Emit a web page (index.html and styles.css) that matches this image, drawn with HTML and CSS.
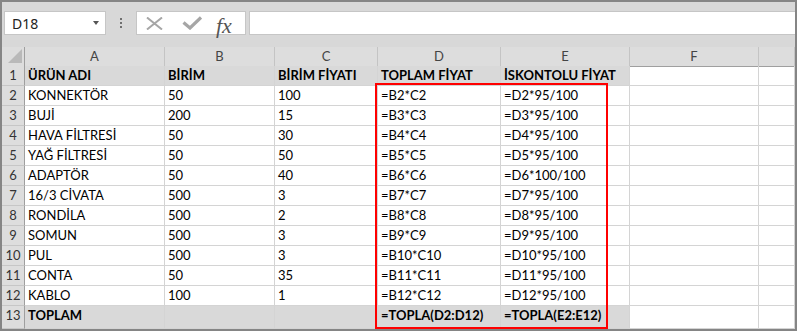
FILE: index.html
```html
<!DOCTYPE html>
<html lang="tr">

<head>
    <meta charset="UTF-8">
    <meta name="viewport" content="width=device-width, initial-scale=1.0">
    <title>Toplam ve iskontolu fiyat</title>
    <link rel="stylesheet" href="styles.css">
</head>

<body>
    <div class="window">
        <div class="formula-bar">
            <div class="name-box">
                <span>D18</span>
                <span class="caret"></span>
            </div>
            <div class="grip"><i></i><i></i><i></i></div>
            <div class="fx-buttons">
                <svg class="icon-cancel" width="17" height="13" viewBox="0 0 17 13">
                    <path d="M1 0.5 L16 12.5 M16 0.5 L1 12.5" />
                </svg>
                <svg class="icon-enter" width="20" height="14" viewBox="0 0 20 14">
                    <path d="M1.5 6.5 L8 12 L19 1.5" />
                </svg>
                <span class="fx">fx</span>
            </div>
            <div class="formula-input"></div>
        </div>

        <div class="sheet">
            <div class="row head">
                <div class="corner">
                    <svg width="23" height="19" viewBox="0 0 23 19">
                        <polygon points="6,16 20,16 20,2" />
                    </svg>
                </div>
                <div class="col">A</div>
                <div class="col">B</div>
                <div class="col">C</div>
                <div class="col">D</div>
                <div class="col">E</div>
                <div class="col">F</div>
                <div class="col"></div>
            </div>

            <div class="row shaded bold">
                <div class="rh">1</div>
                <div class="c">ÜRÜN ADI</div>
                <div class="c">BİRİM</div>
                <div class="c">BİRİM FİYATI</div>
                <div class="c">TOPLAM FİYAT</div>
                <div class="c">İSKONTOLU FİYAT</div>
                <div class="c"></div>
                <div class="c"></div>
            </div>
            <div class="row">
                <div class="rh">2</div>
                <div class="c">KONNEKTÖR</div>
                <div class="c">50</div>
                <div class="c">100</div>
                <div class="c">=B2*C2</div>
                <div class="c">=D2*95/100</div>
                <div class="c"></div>
                <div class="c"></div>
            </div>
            <div class="row">
                <div class="rh">3</div>
                <div class="c">BUJİ</div>
                <div class="c">200</div>
                <div class="c">15</div>
                <div class="c">=B3*C3</div>
                <div class="c">=D3*95/100</div>
                <div class="c"></div>
                <div class="c"></div>
            </div>
            <div class="row">
                <div class="rh">4</div>
                <div class="c">HAVA FİLTRESİ</div>
                <div class="c">50</div>
                <div class="c">30</div>
                <div class="c">=B4*C4</div>
                <div class="c">=D4*95/100</div>
                <div class="c"></div>
                <div class="c"></div>
            </div>
            <div class="row">
                <div class="rh">5</div>
                <div class="c">YAĞ FİLTRESİ</div>
                <div class="c">50</div>
                <div class="c">50</div>
                <div class="c">=B5*C5</div>
                <div class="c">=D5*95/100</div>
                <div class="c"></div>
                <div class="c"></div>
            </div>
            <div class="row">
                <div class="rh">6</div>
                <div class="c">ADAPTÖR</div>
                <div class="c">50</div>
                <div class="c">40</div>
                <div class="c">=B6*C6</div>
                <div class="c">=D6*100/100</div>
                <div class="c"></div>
                <div class="c"></div>
            </div>
            <div class="row">
                <div class="rh">7</div>
                <div class="c">16/3 CİVATA</div>
                <div class="c">500</div>
                <div class="c">3</div>
                <div class="c">=B7*C7</div>
                <div class="c">=D7*95/100</div>
                <div class="c"></div>
                <div class="c"></div>
            </div>
            <div class="row">
                <div class="rh">8</div>
                <div class="c">RONDİLA</div>
                <div class="c">500</div>
                <div class="c">2</div>
                <div class="c">=B8*C8</div>
                <div class="c">=D8*95/100</div>
                <div class="c"></div>
                <div class="c"></div>
            </div>
            <div class="row">
                <div class="rh">9</div>
                <div class="c">SOMUN</div>
                <div class="c">500</div>
                <div class="c">3</div>
                <div class="c">=B9*C9</div>
                <div class="c">=D9*95/100</div>
                <div class="c"></div>
                <div class="c"></div>
            </div>
            <div class="row">
                <div class="rh">10</div>
                <div class="c">PUL</div>
                <div class="c">500</div>
                <div class="c">3</div>
                <div class="c">=B10*C10</div>
                <div class="c">=D10*95/100</div>
                <div class="c"></div>
                <div class="c"></div>
            </div>
            <div class="row">
                <div class="rh">11</div>
                <div class="c">CONTA</div>
                <div class="c">50</div>
                <div class="c">35</div>
                <div class="c">=B11*C11</div>
                <div class="c">=D11*95/100</div>
                <div class="c"></div>
                <div class="c"></div>
            </div>
            <div class="row">
                <div class="rh">12</div>
                <div class="c">KABLO</div>
                <div class="c">100</div>
                <div class="c">1</div>
                <div class="c">=B12*C12</div>
                <div class="c">=D12*95/100</div>
                <div class="c"></div>
                <div class="c"></div>
            </div>
            <div class="row shaded bold total">
                <div class="rh">13</div>
                <div class="c">TOPLAM</div>
                <div class="c"></div>
                <div class="c"></div>
                <div class="c">=TOPLA(D2:D12)</div>
                <div class="c">=TOPLA(E2:E12)</div>
                <div class="c"></div>
                <div class="c"></div>
            </div>

            <!-- kırmızı çerçeve: D2:E13 -->
            <div class="mark"></div>
        </div>
    </div>
</body>

</html>
```

FILE: styles.css
```css
body {
    margin: 0;
    background-color: #fff;
}

.window {
    width: 797px;
    height: 331px;
    box-sizing: border-box;
    border: 2px solid #858585;
    background-color: #d8d8d8;
    overflow: hidden;
}

/* formül çubuğu */

.formula-bar {
    display: flex;
    align-items: center;
    height: 24px;
    padding: 9px 0 0 2px;
    margin-bottom: 12px;
}

.name-box {
    width: 102px;
    height: 24px;
    box-sizing: border-box;
    border: 1px solid #c6c6c6;
    background-color: #fff;
    display: flex;
    align-items: center;
    padding: 0 6px 0 7px;
    font-family: 'Noto Sans', 'DejaVu Sans', sans-serif;
    font-size: 14px;
    color: #222;
}

.caret {
    margin-left: auto;
    width: 0;
    height: 0;
    border-left: 3px solid transparent;
    border-right: 3px solid transparent;
    border-top: 4px solid #555;
}

.grip {
    display: flex;
    flex-direction: column;
    gap: 2px;
    margin-left: 14px;
}

.grip i {
    display: block;
    width: 2px;
    height: 2px;
    background-color: #6f6f6f;
}

.fx-buttons {
    width: 110px;
    height: 24px;
    box-sizing: border-box;
    margin-left: 14px;
    border: 1px solid #c6c6c6;
    background-color: #fff;
    display: flex;
    align-items: center;
    padding-left: 9px;
}

.fx-buttons svg {
    display: block;
    fill: none;
    stroke: #a6a6a6;
}

.icon-cancel {
    stroke-width: 2;
    margin-right: 19px;
}

.icon-enter {
    stroke-width: 3.2;
    margin-right: 14px;
}

.fx {
    display: block;
    height: 22px;
    line-height: 27px;
    font-family: 'Liberation Serif', serif;
    font-style: italic;
    font-size: 22px;
    color: #555;
}

.formula-input {
    flex: 1;
    height: 24px;
    box-sizing: border-box;
    margin-left: 3px;
    border: 1px solid #c6c6c6;
    border-right: none;
    background-color: #fff;
}

/* tablo */

.sheet {
    position: relative;
    height: 282px;
    overflow: hidden;
    background-color: #fff;
    font-family: 'Lato', 'Carlito', sans-serif;
    font-size: 13px;
    color: #000;
}

.row {
    display: grid;
    grid-template-columns: 23px 140px 110px 103px 123px 129px 129px 1fr;
    height: 20px;
    line-height: 19px;
}

.row > div {
    box-sizing: border-box;
    white-space: nowrap;
}

.row.total {
    height: 23px;
}

.head {
    height: 19px;
    line-height: 18px;
    background-color: #dddddd;
    color: #444;
}

.corner {
    border-right: 1px solid #9f9f9f;
    border-bottom: 1px solid #9f9f9f;
}

.corner svg {
    display: block;
    fill: #b9b9b9;
}

.col {
    text-align: center;
    border-right: 1px solid #c4c4c4;
    border-bottom: 1px solid #9f9f9f;
}

.rh {
    background-color: #dddddd;
    color: #333;
    text-align: center;
    border-right: 1px solid #9f9f9f;
    border-bottom: 1px solid #c6c6c6;
}

.c {
    padding: 0 3px;
    border-right: 1px solid #d4d4d4;
    border-bottom: 1px solid #d4d4d4;
}

.shaded .c:nth-child(-n+6) {
    background-color: #d9d9d9;
}

.bold .c {
    font-weight: bold;
}

.mark {
    position: absolute;
    left: 373px;
    top: 36px;
    width: 233px;
    height: 246px;
    box-sizing: border-box;
    border: 2px solid #ff0000;
}
```
